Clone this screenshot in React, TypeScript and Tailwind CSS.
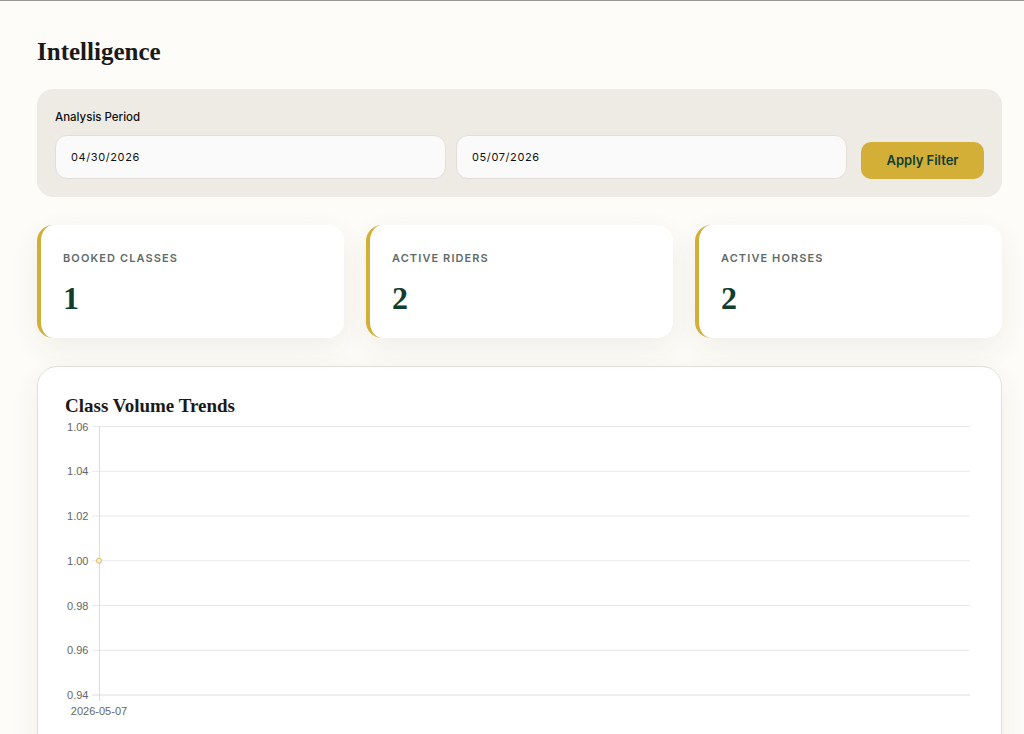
const inter = "font-['Inter',sans-serif]";
const serif = "font-['Liberation_Serif','DejaVu_Serif',serif]";

function Stat({ label, value }: { label: string; value: string }) {
  return (
    <div className="h-[113px] flex-1 rounded-[16px] border-l-4 border-[#d4af37] bg-white pl-[22px] pt-[26px] shadow-[0_10px_30px_rgba(60,50,30,0.07)]">
      <div className={`${inter} text-[11px] leading-[14px] font-semibold tracking-[1.1px] text-[#5f6b68]`}>{label}</div>
      <div className={`${serif} mt-[15px] text-[32px] leading-[36px] font-bold text-[#0f3d2e]`}>{value}</div>
    </div>
  );
}

function DateField({ value }: { value: string }) {
  return (
    <div className={`${inter} flex h-[44px] flex-1 items-center rounded-[12px] border border-[#e2dfd9] bg-[#fafafa] pl-[15px] text-[11px] tracking-[0.6px] text-[#111]`}>
      {value}
    </div>
  );
}

function Chart() {
  const ticks = ["1.06", "1.04", "1.02", "1.00", "0.98", "0.96", "0.94"];
  const x0 = 34;
  const top = 8;
  const step = 44.75;
  return (
    <svg width="909" height="310" viewBox="0 0 909 310" className="block">
      {ticks.map((t, i) => {
        const y = top + i * step + 0.5;
        return (
          <g key={t}>
            <line x1={x0 - 7} x2={905} y1={y} y2={y} stroke={i === 6 ? "#dcdcdc" : "#e8e8e8"} strokeWidth="1" />
            <text x={x0 - 10.5} y={y + 4} textAnchor="end" fontSize="11" fill="#666" fontFamily="Liberation Sans, sans-serif">
              {t}
            </text>
          </g>
        );
      })}
      <line x1={x0 + 0.5} x2={x0 + 0.5} y1={top} y2={283} stroke="#dcdcdc" strokeWidth="1" />
      <circle cx={x0} cy={top + 3 * step + 0.5} r="2.6" fill="#f8efd2" stroke="#dcbc5c" strokeWidth="1" />
      <text x={x0} y={297} textAnchor="middle" fontSize="11" fill="#666" fontFamily="Liberation Sans, sans-serif">
        2026-05-07
      </text>
    </svg>
  );
}

export default function App() {
  return (
    <div className="h-[734px] overflow-hidden border-t border-[#9a9892] bg-[#fdfcf8] px-[37px] pr-[22px] pt-[36px]">
      <h1 className={`${serif} h-[52px] text-[25px] leading-[30px] font-bold text-[#1a1a1a]`}>Intelligence</h1>

      <div className="h-[108px] rounded-[16px] bg-[#eeebe4] px-[18px] pt-[21px]">
        <div className={`${inter} text-[11.5px] leading-[14px] font-medium text-[#111]`}>Analysis Period</div>
        <div className="mt-[11px] flex items-end">
          <div className="flex flex-1 gap-[10px]">
            <DateField value="04/30/2026" />
            <DateField value="05/07/2026" />
          </div>
          <button className={`${inter} ml-[14px] h-[37px] w-[123px] rounded-[10px] bg-[#d4af37] text-[13px] font-semibold text-[#0f3d2e]`}>
            Apply Filter
          </button>
        </div>
      </div>

      <div className="mt-[28px] flex gap-[22px]">
        <Stat label="BOOKED CLASSES" value="1" />
        <Stat label="ACTIVE RIDERS" value="2" />
        <Stat label="ACTIVE HORSES" value="2" />
      </div>

      <div className="mt-[28px] h-[420px] rounded-[20px] border border-[#e2dfd9] bg-white pl-[27px] pt-[27px] shadow-[0_10px_30px_rgba(60,50,30,0.07)]">
        <h2 className={`${serif} text-[19px] leading-[24px] font-bold text-[#1a1a1a]`}>Class Volume Trends</h2>
        <Chart />
      </div>
    </div>
  );
}
